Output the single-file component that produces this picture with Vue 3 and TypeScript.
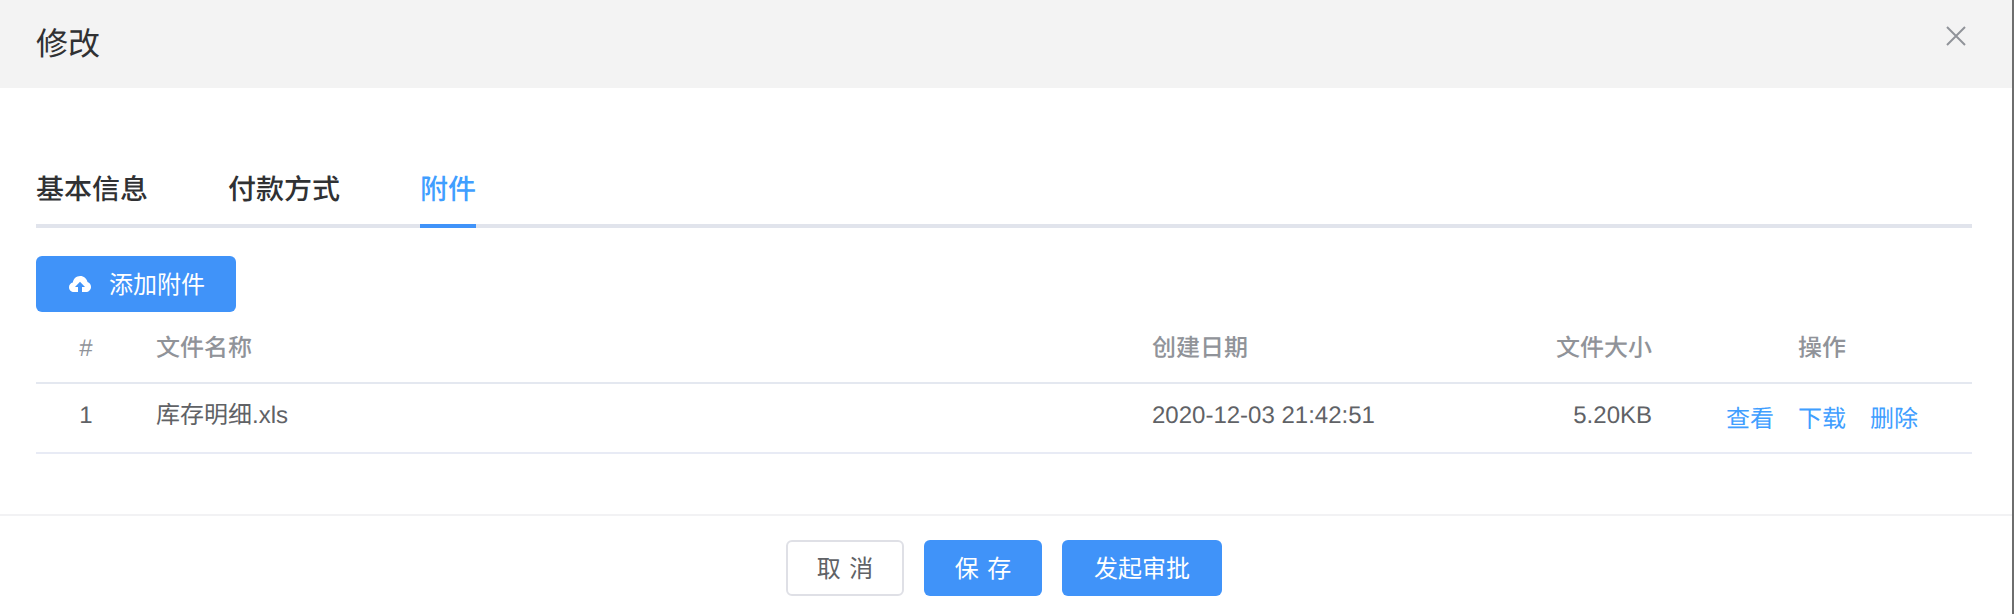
<script setup lang="ts">
const tabs = [
  { label: '基本信息', active: false },
  { label: '付款方式', active: false },
  { label: '附件', active: true },
]
const rows = [
  { index: 1, name: '库存明细.xls', date: '2020-12-03 21:42:51', size: '5.20KB' },
]
const actions = ['查看', '下载', '删除']
</script>

<template>
  <div class="dialog">
    <header class="head">
      <h1 class="title">修改</h1>
      <svg class="close" width="20" height="20" viewBox="0 0 20 20" fill="none" stroke="#909399" stroke-width="2">
        <path d="M1 1 L19 19 M19 1 L1 19" />
      </svg>
    </header>
    <main class="body">
      <nav class="tabs">
        <span v-for="t in tabs" :key="t.label" class="tab" :class="{ active: t.active }">{{ t.label }}</span>
      </nav>
      <button class="btn primary add">
        <svg class="cloud" width="22" height="16" viewBox="0 0 22 16">
          <path fill="#fff" d="M5 16C2.2 16 0 13.9 0 11.2 0 8.9 1.6 7 3.8 6.5 4.3 2.8 7.4 0 11.2 0c3.6 0 6.7 2.6 7.3 6.1 2 .6 3.5 2.5 3.5 4.8 0 2.8-2.3 5.1-5.1 5.1H13v-5h3l-5-5.2L6 11h3v5H5z" />
        </svg>
        <span>添加附件</span>
      </button>
      <div class="table">
        <div class="row head-row">
          <span class="c-index">#</span>
          <span class="c-name">文件名称</span>
          <span class="c-date">创建日期</span>
          <span class="c-size">文件大小</span>
          <span class="c-op">操作</span>
        </div>
        <div v-for="r in rows" :key="r.index" class="row data-row">
          <span class="c-index">{{ r.index }}</span>
          <span class="c-name">{{ r.name }}</span>
          <span class="c-date">{{ r.date }}</span>
          <span class="c-size">{{ r.size }}</span>
          <span class="c-op links">
            <a v-for="a in actions" :key="a">{{ a }}</a>
          </span>
        </div>
      </div>
    </main>
    <footer class="foot">
      <button class="btn plain cancel">取 消</button>
      <button class="btn primary save">保 存</button>
      <button class="btn primary approve">发起审批</button>
    </footer>
  </div>
</template>

<style>
html, body { margin: 0; background: #fff; }
</style>

<style scoped>
.dialog {
  width: 2014px;
  height: 614px;
  box-sizing: border-box;
  border-right: 2px solid #6e6e6e;
  display: flex;
  flex-direction: column;
  font-family: "Liberation Sans", "Noto Sans CJK SC", sans-serif;
  text-rendering: geometricPrecision;
  background: #fff;
  overflow: hidden;
}
.head {
  height: 88px;
  flex: none;
  background: #f3f3f3;
  display: flex;
  align-items: center;
  justify-content: space-between;
  padding: 0 46px 0 36px;
}
.title {
  margin: 0;
  font-size: 32px;
  font-weight: 400;
  color: #303133;
  line-height: 84px;
}
.close { margin-top: -16px; }
.body {
  flex: 1;
  padding: 78px 40px 0 36px;
  min-height: 0;
}
.tabs {
  display: flex;
  gap: 80px;
  height: 58px;
  border-bottom: 4px solid #e1e4ec;
}
.tab {
  font-size: 28px;
  font-weight: 500;
  line-height: 48px;
  color: #303133;
  height: 58px;
}
.tab.active {
  color: #409eff;
  border-bottom: 4px solid #4093f9;
}
.btn {
  font-family: inherit;
  font-size: 24px;
  height: 56px;
  box-sizing: border-box;
  border-radius: 6px;
  padding: 0 0 3px;
  display: inline-flex;
  align-items: center;
  justify-content: center;
  border: 0;
}
.primary { background: #4093f9; color: #fff; }
.plain { background: #fff; color: #606266; border: 2px solid #dfe0e6; }
.add {
  margin-top: 28px;
  width: 200px;
  gap: 18px;
  display: flex;
  justify-content: flex-start;
  padding-left: 33px;
}
.cloud { margin-top: 3px; }
.table { font-size: 24px; line-height: 32px; }
.row {
  display: flex;
  align-items: center;
  border-bottom: 2px solid #e4e8f0;
}
.head-row {
  height: 72px;
  box-sizing: border-box;
  padding-top: 4px;
  color: #909399;
  font-weight: 500;
}
.data-row {
  height: 70px;
  box-sizing: border-box;
  padding-bottom: 5px;
  color: #606266;
  border-bottom-color: #e8ebf5;
}
.c-index { width: 100px; text-align: center; flex: none; }
.c-name { flex: 1; padding-left: 20px; }
.c-date { width: 400px; flex: none; }
.c-size { width: 120px; padding-right: 20px; box-sizing: border-box; text-align: right; flex: none; }
.c-op {
  width: 300px;
  flex: none;
  text-align: center;
}
.links {
  display: flex;
  justify-content: center;
  gap: 24px;
  color: #409eff;
  padding-top: 8px;
}
.foot {
  height: 100px;
  box-sizing: border-box;
  flex: none;
  border-top: 2px solid #f2f2f4;
  display: flex;
  justify-content: center;
  gap: 20px;
  padding: 24px 4px 0 0;
}
.cancel, .save { width: 118px; word-spacing: 2px; }
.approve { width: 160px; }
</style>
